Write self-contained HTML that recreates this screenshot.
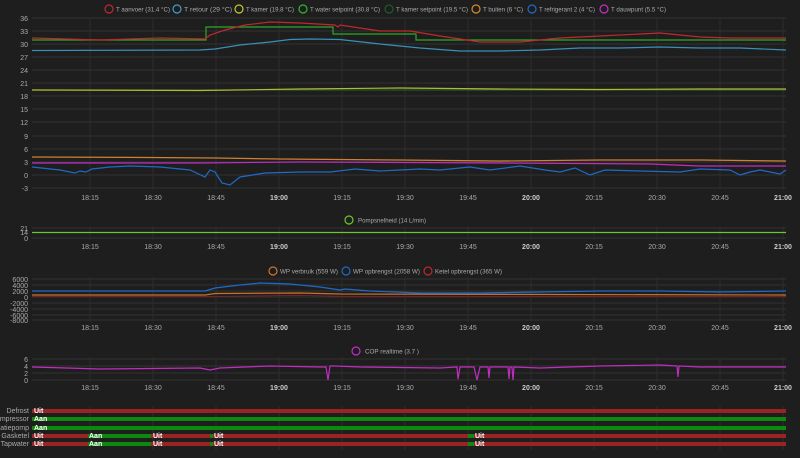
<!DOCTYPE html><html><head><style>
body{margin:0;background:#1e1e1e;width:800px;height:453px;overflow:hidden;font-family:"Liberation Sans",sans-serif}
text{font-family:"Liberation Sans",sans-serif;font-size:7px;fill:#aaa}
.lg{font-size:6.5px}
</style></head><body>
<svg width="800" height="453" xmlns="http://www.w3.org/2000/svg">
<rect width="800" height="453" fill="#1e1e1e"/>
<g stroke="#333" stroke-width="1">
<line x1="32" y1="18" x2="786" y2="18"/><line x1="32" y1="31" x2="786" y2="31"/><line x1="32" y1="44" x2="786" y2="44"/><line x1="32" y1="57" x2="786" y2="57"/><line x1="32" y1="70" x2="786" y2="70"/><line x1="32" y1="83" x2="786" y2="83"/><line x1="32" y1="96" x2="786" y2="96"/><line x1="32" y1="109" x2="786" y2="109"/><line x1="32" y1="122" x2="786" y2="122"/><line x1="32" y1="136" x2="786" y2="136"/><line x1="32" y1="149" x2="786" y2="149"/><line x1="32" y1="162" x2="786" y2="162"/><line x1="32" y1="175" x2="786" y2="175"/><line x1="32" y1="188" x2="786" y2="188"/>
<line x1="32" y1="228" x2="786" y2="228"/><line x1="32" y1="238" x2="786" y2="238"/>
<line x1="32" y1="279" x2="786" y2="279"/><line x1="32" y1="285" x2="786" y2="285"/><line x1="32" y1="291" x2="786" y2="291"/><line x1="32" y1="297" x2="786" y2="297"/><line x1="32" y1="303" x2="786" y2="303"/><line x1="32" y1="309" x2="786" y2="309"/><line x1="32" y1="315" x2="786" y2="315"/><line x1="32" y1="320" x2="786" y2="320"/>
<line x1="32" y1="359" x2="786" y2="359"/><line x1="32" y1="366" x2="786" y2="366"/><line x1="32" y1="373" x2="786" y2="373"/><line x1="32" y1="380" x2="786" y2="380"/>
</g>
<g stroke="#2c2c2c" stroke-width="1">
<path d="M90 18V190M153 18V190M216 18V190M279 18V190M342 18V190M405 18V190M468 18V190M531 18V190M594 18V190M657 18V190M720 18V190M783 18V190"/>
<path d="M90 226V240M153 226V240M216 226V240M279 226V240M342 226V240M405 226V240M468 226V240M531 226V240M594 226V240M657 226V240M720 226V240M783 226V240"/>
<path d="M90 277V322M153 277V322M216 277V322M279 277V322M342 277V322M405 277V322M468 277V322M531 277V322M594 277V322M657 277V322M720 277V322M783 277V322"/>
<path d="M90 357V382M153 357V382M216 357V382M279 357V382M342 357V382M405 357V382M468 357V382M531 357V382M594 357V382M657 357V382M720 357V382M783 357V382"/>
<path d="M90 406V450M153 406V450M216 406V450M279 406V450M342 406V450M405 406V450M468 406V450M531 406V450M594 406V450M657 406V450M720 406V450M783 406V450"/>
</g>
<g text-anchor="end">
<text x="28" y="21">36</text><text x="28" y="34">33</text><text x="28" y="47">30</text><text x="28" y="60">27</text><text x="28" y="73">24</text><text x="28" y="86">21</text><text x="28" y="99">18</text><text x="28" y="112">15</text><text x="28" y="125">12</text><text x="28" y="139">9</text><text x="28" y="152">6</text><text x="28" y="165">3</text><text x="28" y="178">0</text><text x="28" y="191">-3</text>
<text x="28" y="231">21</text><text x="28" y="235">14</text><text x="28" y="241">0</text>
<text x="28" y="282">6000</text><text x="28" y="288">4000</text><text x="28" y="294">2000</text><text x="28" y="300">0</text><text x="28" y="306">-2000</text><text x="28" y="312">-4000</text><text x="28" y="318">-6000</text><text x="28" y="323">-8000</text>
<text x="28" y="362">6</text><text x="28" y="369">4</text><text x="28" y="376">2</text><text x="28" y="383">0</text>
<text x="29" y="413">Defrost</text><text x="29" y="421">Compressor</text><text x="29" y="430">Circulatiepomp</text><text x="29" y="438">Gasketel</text><text x="29" y="446">Tapwater</text>
</g>
<g text-anchor="middle" id="xl">
<text x="90" y="200">18:15</text><text x="153" y="200">18:30</text><text x="216" y="200">18:45</text><text x="279" y="200" font-weight="bold" style="fill:#ccc">19:00</text><text x="342" y="200">19:15</text><text x="405" y="200">19:30</text><text x="468" y="200">19:45</text><text x="531" y="200" font-weight="bold" style="fill:#ccc">20:00</text><text x="594" y="200">20:15</text><text x="657" y="200">20:30</text><text x="720" y="200">20:45</text><text x="783" y="200" font-weight="bold" style="fill:#ccc">21:00</text>
</g>
<use href="#xl" y="49"/><use href="#xl" y="130"/><use href="#xl" y="190"/>
<g stroke-width="1.2" fill="none">
<circle cx="109" cy="9" r="4" stroke="#c0282d"/><circle cx="177" cy="9" r="4" stroke="#3fa0c8"/><circle cx="239" cy="9" r="4" stroke="#c8c82d"/><circle cx="303" cy="9" r="4" stroke="#2db82d"/><circle cx="389" cy="9" r="4" stroke="#1e5a2d"/><circle cx="476" cy="9" r="4" stroke="#d88a2d"/><circle cx="532" cy="9" r="4" stroke="#1e6ac8"/><circle cx="604" cy="9" r="4" stroke="#c82dc8"/>
<circle cx="349" cy="220" r="4" stroke="#6ac82d"/>
<circle cx="273" cy="271" r="4" stroke="#d0742d"/><circle cx="346" cy="271" r="4" stroke="#1e6ac8"/><circle cx="428" cy="271" r="4" stroke="#c0282d"/>
<circle cx="356" cy="351" r="4" stroke="#c82dc8"/>
</g>
<g class="lg">
<text class="lg" x="116" y="11.5" textLength="54" lengthAdjust="spacingAndGlyphs">T aanvoer (31.4 °C)</text>
<text class="lg" x="184" y="11.5" textLength="48" lengthAdjust="spacingAndGlyphs">T retour (29 °C)</text>
<text class="lg" x="246" y="11.5" textLength="48" lengthAdjust="spacingAndGlyphs">T kamer (19.8 °C)</text>
<text class="lg" x="310" y="11.5" textLength="70" lengthAdjust="spacingAndGlyphs">T water setpoint (30.8 °C)</text>
<text class="lg" x="396" y="11.5" textLength="72" lengthAdjust="spacingAndGlyphs">T kamer setpoint (19.5 °C)</text>
<text class="lg" x="483" y="11.5" textLength="40" lengthAdjust="spacingAndGlyphs">T buiten (6 °C)</text>
<text class="lg" x="539" y="11.5" textLength="56" lengthAdjust="spacingAndGlyphs">T refrigerant 2 (4 °C)</text>
<text class="lg" x="611" y="11.5" textLength="55" lengthAdjust="spacingAndGlyphs">T dauwpunt (5.5 °C)</text>
<text class="lg" x="358" y="222.5" textLength="68" lengthAdjust="spacingAndGlyphs">Pompsnelheid (14 L/min)</text>
<text class="lg" x="280" y="273.5" textLength="58" lengthAdjust="spacingAndGlyphs">WP verbruik (559 W)</text>
<text class="lg" x="353" y="273.5" textLength="67" lengthAdjust="spacingAndGlyphs">WP opbrengst (2058 W)</text>
<text class="lg" x="435" y="273.5" textLength="67" lengthAdjust="spacingAndGlyphs">Ketel opbrengst (365 W)</text>
<text class="lg" x="365" y="353.5" textLength="54" lengthAdjust="spacingAndGlyphs">COP realtime (3.7  )</text>
</g>
<g fill="none" stroke-width="1.2">
<polyline stroke="#3a8fb8" points="32,50.5 200,50 215,49 240,45 270,42 290,39.5 310,39 340,39.5 380,44 420,48 460,51 500,51 540,50 580,48 620,48 660,47 700,48 740,48 786,50"/>
<polyline stroke="#1e5a2d" points="32,90 786,90"/>
<polyline stroke="#b8b82d" points="32,90 200,90.5 300,89 400,88 500,89 600,89.5 700,89 786,89"/>
<polyline stroke="#2da82d" points="32,40 206,40 206,27 333,27 333,34 416,34 416,40 786,40"/>
<polyline stroke="#c0282d" points="32,38 100,40 160,38 205,39 210,35 225,30 245,25 270,22 300,23 335,25 338,27 340,25 360,28 380,31 410,31 440,36 480,42 520,42 560,38 600,36 640,34 660,33 680,35 700,37 730,38 786,38"/>
<polyline stroke="#d08030" points="32,157 150,157.5 216,158 280,159 400,160 500,161 600,160 700,160 786,161"/>
<polyline stroke="#c02dc0" points="32,163 200,163 300,162 500,163 650,164 700,166 786,166"/>
<polyline stroke="#1e6ac8" points="32,167 60,170 75,173 80,171 86,172 92,169 110,167 130,166 160,167 190,170 205,177 210,170 215,172 222,183 230,185 240,177 265,173 300,172 330,172 355,169 380,171 400,170 420,169 440,170 470,167 490,170 520,166 545,170 560,172 575,168 590,175 605,170 640,171 680,172 700,169 730,170 740,175 750,172 760,170 780,174 786,170"/>
<polyline stroke="#6ac82d" points="32,232.5 786,232.5"/>
<polyline stroke="#8a2020" stroke-width="0.8" points="32,296.5 210,296.5 250,296 300,295.5 350,296.5 786,296.5"/>
<polyline stroke="#c8702d" points="32,295 205,295 215,293.5 300,293 340,294 786,295"/>
<polyline stroke="#1e6ac8" points="32,291 150,291 205,291 215,288 240,285 260,283 290,284 320,287 340,290 345,289 370,291 420,293 480,293 540,292 600,291 660,291 720,292 786,291"/>
<polyline stroke="#c02dc0" points="32,367 100,369 200,368 210,370 220,368 245,367 270,366 320,367 326,367 328,380 330,366 335,366 360,367 440,368 457,367 458,379 460,367 474,367 477,380 480,367 488,367 489,378 490,367 508,367 509,379 510,367 512,367 513,380 514,367 540,368 600,366 660,365 677,366 678,377 679,366 700,367 786,367"/>
</g>
<g>
<rect x="32" y="409" width="754" height="4" fill="#9a2424"/>
<rect x="32" y="417" width="754" height="4" fill="#0d8a0d"/>
<rect x="32" y="426" width="754" height="4" fill="#0d8a0d"/>
<rect x="32" y="434" width="754" height="4" fill="#9a2424"/><rect x="88" y="434" width="63" height="4" fill="#0d8a0d"/><rect x="210" y="434" width="3" height="4" fill="#0d8a0d"/><rect x="468" y="434" width="6" height="4" fill="#0d8a0d"/>
<rect x="32" y="442" width="754" height="4" fill="#9a2424"/><rect x="88" y="442" width="63" height="4" fill="#0d8a0d"/><rect x="210" y="442" width="3" height="4" fill="#0d8a0d"/><rect x="468" y="442" width="6" height="4" fill="#0d8a0d"/>
</g>
<g style="font-weight:bold" font-size="7">
<text x="34" y="413" style="fill:#fff">Uit</text><text x="34" y="421" style="fill:#fff">Aan</text><text x="34" y="430" style="fill:#fff">Aan</text>
<text x="34" y="438" style="fill:#fff">Uit</text><text x="89" y="438" style="fill:#fff">Aan</text><text x="153" y="438" style="fill:#fff">Uit</text><text x="214" y="438" style="fill:#fff">Uit</text><text x="475" y="438" style="fill:#fff">Uit</text>
<text x="34" y="446" style="fill:#fff">Uit</text><text x="89" y="446" style="fill:#fff">Aan</text><text x="153" y="446" style="fill:#fff">Uit</text><text x="214" y="446" style="fill:#fff">Uit</text><text x="475" y="446" style="fill:#fff">Uit</text>
</g>
</svg>
</body></html>
